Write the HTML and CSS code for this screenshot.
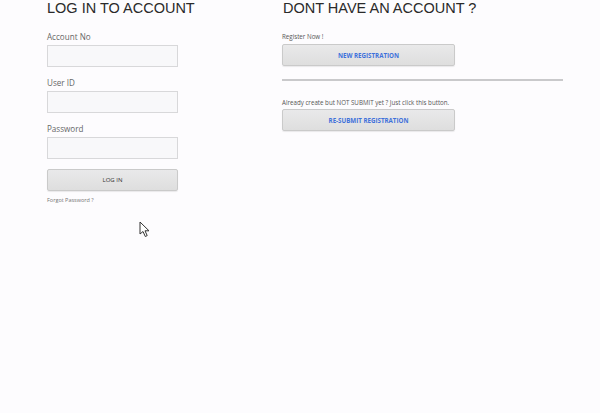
FILE: index.html
```
<!DOCTYPE html>
<html>
<head>
<meta charset="utf-8">
<link rel="stylesheet" href="styles.css">
</head>
<body>
<div class="page">
  <div class="col-left">
    <h1 class="title">LOG IN TO ACCOUNT</h1>
    <div class="form">
      <label class="label">Account No</label>
      <div class="input"></div>
      <label class="label">User ID</label>
      <div class="input"></div>
      <label class="label">Password</label>
      <div class="input"></div>
      <div class="btn btn-login">LOG IN</div>
      <div class="forgot">Forgot Password ?</div>
    </div>
  </div>
  <div class="col-right">
    <h1 class="title">DONT HAVE AN ACCOUNT ?</h1>
    <div class="small first">Register Now !</div>
    <div class="btn btn-reg">NEW REGISTRATION</div>
    <div class="rule"></div>
    <div class="small second">Already create but NOT SUBMIT yet ? Just click this button.</div>
    <div class="btn btn-reg">RE-SUBMIT REGISTRATION</div>
  </div>
</div>
<svg class="cursor" width="12" height="18" viewBox="0 0 12 18">
  <path d="M1 1 L1 13 L4 10.5 L6.3 15.5 L8.2 14.6 L6 9.8 L10 9.8 Z" fill="#fff" stroke="#333" stroke-width="1" stroke-linejoin="round"/>
</svg>
</body>
</html>
```
FILE: styles.css
```
html, body {
  margin: 0;
  padding: 0;
  background: #fdfcfe;
}
body {
  width: 600px;
  height: 413px;
  overflow: hidden;
  position: relative;
  font-family: "Open Sans", "DejaVu Sans", sans-serif;
}
.page {
  display: flex;
  padding-left: 47px;
  gap: 104px;
}
.col-left {
  width: 131px;
  display: flex;
  flex-direction: column;
}
.col-right {
  width: 281px;
  display: flex;
  flex-direction: column;
}
.title {
  margin: 0;
  font-family: "Liberation Sans", Arial, sans-serif;
  font-weight: normal;
  font-size: 14.5px;
  line-height: 16px;
  color: #2a2a2a;
  white-space: nowrap;
}
.col-right .title {
  padding-left: 1px;
}
.form {
  display: flex;
  flex-direction: column;
  margin-top: 15px;
}
.label {
  font-size: 8.1px;
  line-height: 12px;
  color: #666;
  margin-bottom: 2px;
}
.input {
  height: 20px;
  border: 1px solid #d8d8da;
  background: #f8f8fa;
  margin-bottom: 10px;
}
.btn {
  height: 20px;
  border: 1px solid #cacaca;
  border-radius: 2px;
  background: linear-gradient(#e9e9ea, #dedede);
  box-shadow: 0 1px 1px rgba(0,0,0,0.08);
  display: flex;
  align-items: center;
  justify-content: center;
  font-size: 6px;
}
.btn-login {
  color: #333;
}
.forgot {
  font-size: 5.5px;
  line-height: 8px;
  color: #777;
  margin-top: 5px;
}
.small {
  font-size: 6.2px;
  line-height: 8px;
  color: #555;
  white-space: nowrap;
}
.small.first {
  margin-top: 17px;
  margin-bottom: 3px;
}
.small.second {
  margin-bottom: 2px;
}
.btn-reg {
  width: 171px;
  color: #3f71db;
  font-weight: bold;
  font-size: 6.2px;
}
.rule {
  height: 2px;
  background: #c9c9cb;
  margin-top: 13px;
  margin-bottom: 18px;
}
.cursor {
  position: absolute;
  left: 139px;
  top: 221px;
}
```
